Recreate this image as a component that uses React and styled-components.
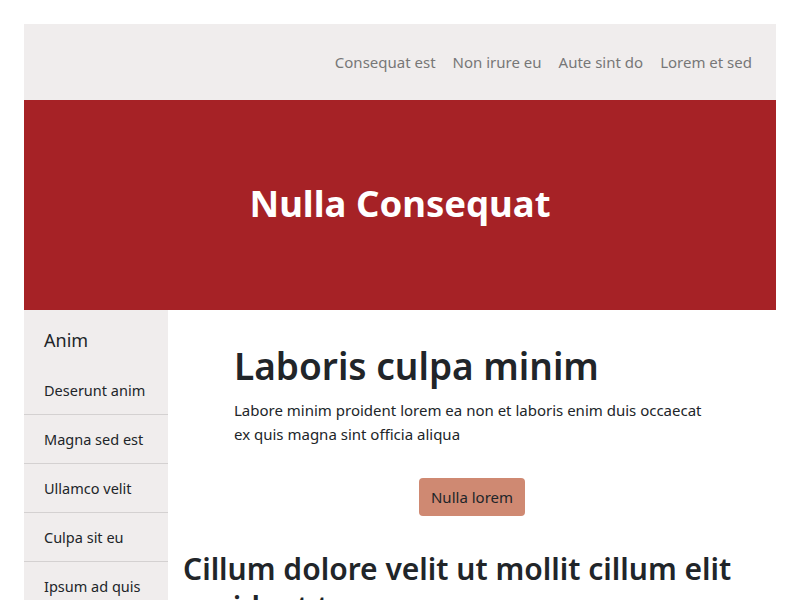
import React from 'react';
import styled, { createGlobalStyle } from 'styled-components';

const GlobalStyle = createGlobalStyle`
  body {
    margin: 0;
    padding: 24px;
    font-family: "Noto Sans", "Open Sans", sans-serif;
    color: #212529;
    background: #fff;
  }
  * { box-sizing: border-box; }
`;

const Page = styled.div`
  width: 752px;
  height: 576px;
  overflow: hidden;
`;

const TopBar = styled.header`
  height: 76px;
  background: #f0eded;
  display: flex;
  justify-content: flex-end;
  align-items: center;
  padding: 0 24px 0;
  gap: 17px;
`;

const NavLink = styled.a`
  color: #777;
  font-size: 15px;
  text-decoration: none;
`;

const Hero = styled.section`
  height: 210px;
  background: #a62226;
  display: flex;
  align-items: center;
  justify-content: center;
  padding-bottom: 4px;
`;

const HeroTitle = styled.h1`
  margin: 0;
  color: #fff;
  font-size: 36.5px;
  font-weight: 700;
`;

const Body = styled.div`
  display: flex;
`;

const Sidebar = styled.nav`
  width: 144px;
  flex-shrink: 0;
  background: #f0eded;
  min-height: 300px;
`;

const SideHeading = styled.div`
  font-size: 18px;
  padding: 18px 20px 14px;
  line-height: 24px;
  color: #212529;
`;

const SideItem = styled.div`
  font-size: 14.5px;
  line-height: 24px;
  padding: 12px 20px 12px;
  white-space: nowrap;
  border-bottom: ${p => (p.last ? 'none' : '1px solid #d4d1d1')};
  color: #212529;
`;

const Main = styled.main`
  flex: 1;
  padding: 32px 15px 0;
`;

const Intro = styled.section`
  width: 476px;
  margin: 0 auto;
  display: flex;
  flex-direction: column;
`;

const Title = styled.h1`
  margin: 0 0 8px;
  font-size: 37px;
  line-height: 48px;
  font-weight: 600;
`;

const Lead = styled.p`
  margin: 0;
  font-size: 15px;
  line-height: 24px;
`;

const Button = styled.button`
  align-self: center;
  margin-top: 32px;
  background: #cf8972;
  border: none;
  border-radius: 4px;
  height: 38px;
  padding: 0 12px;
  font-family: inherit;
  font-size: 15px;
  color: #212529;
`;

const SubTitle = styled.h2`
  margin: 34px 0 0;
  font-size: 30px;
  line-height: 38px;
  font-weight: 600;
`;

const navItems = ['Consequat est', 'Non irure eu', 'Aute sint do', 'Lorem et sed'];
const sideItems = ['Deserunt anim', 'Magna sed est', 'Ullamco velit', 'Culpa sit eu', 'Ipsum ad quis'];

export default function App() {
  return (
    <>
      <GlobalStyle />
      <Page>
        <TopBar>
          {navItems.map(item => (
            <NavLink key={item} href="#">{item}</NavLink>
          ))}
        </TopBar>
        <Hero>
          <HeroTitle>Nulla Consequat</HeroTitle>
        </Hero>
        <Body>
          <Sidebar>
            <SideHeading>Anim</SideHeading>
            {sideItems.map((item, i) => (
              <SideItem key={item} last={i === sideItems.length - 1}>{item}</SideItem>
            ))}
          </Sidebar>
          <Main>
            <Intro>
              <Title>Laboris culpa minim</Title>
              <Lead>Labore minim proident lorem ea non et laboris enim duis occaecat ex quis magna sint officia aliqua</Lead>
              <Button>Nulla lorem</Button>
            </Intro>
            <SubTitle>Cillum dolore velit ut mollit cillum elit proident tempor</SubTitle>
          </Main>
        </Body>
      </Page>
    </>
  );
}
